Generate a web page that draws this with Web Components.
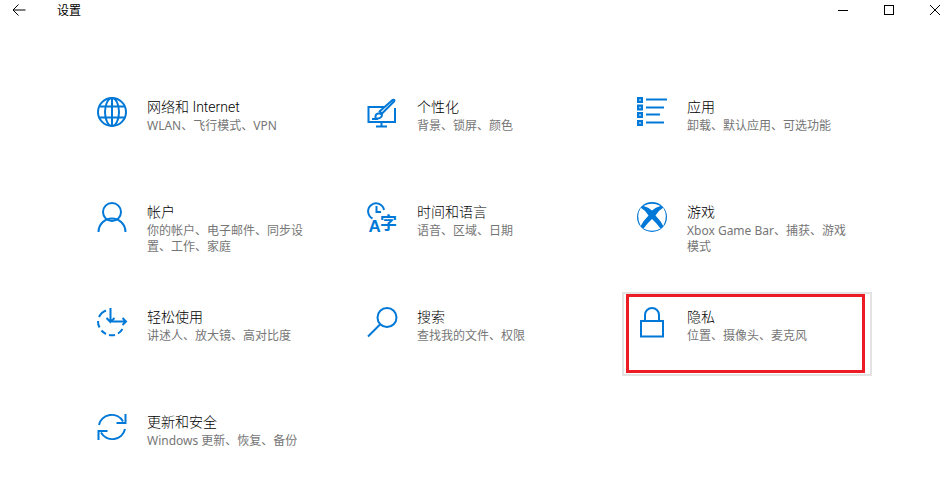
<!DOCTYPE html>
<html lang="zh">
<head>
<meta charset="utf-8">
<title>设置</title>
<style>
    html, body { margin: 0; background: #fff; }
    body { font-family: "Noto Sans", "Noto Sans CJK SC", sans-serif; overflow: hidden; }
</style>
</head>
<body>
<settings-app>
    <title-bar slot="bar" label="设置"></title-bar>

    <settings-tile name="网络和 Internet" desc="WLAN、飞行模式、VPN">
        <svg slot="icon" viewBox="0 0 30 30" fill="none" stroke="#0078d7" stroke-width="2">
            <circle cx="15" cy="15" r="14"/>
            <ellipse cx="15" cy="15" rx="7" ry="14"/>
            <path d="M15 1V29M2.5 9.5H27.5M2.5 20.5H27.5"/>
        </svg>
    </settings-tile>
    <settings-tile name="个性化" desc="背景、锁屏、颜色">
        <svg slot="icon" viewBox="0 0 30 30" fill="none" stroke="#0078d7" stroke-width="2">
            <path d="M18 10H1.5V25H28V11"/>
            <path d="M14.500 25V30M9 29.500H20"/>
            <path d="M5 22H11"/>
            <path d="M27 4.500L15 16.500L12.500 14.500L25.500 3Q28.500 2 27 4.500Z" stroke-linejoin="round"/>
            <path d="M8.500 21.500Q8 17 11 16.500Q14 16 15 18Q14.500 22 8.500 21.500Z" fill="#fff"/>
        </svg>
    </settings-tile>
    <settings-tile name="应用" desc="卸载、默认应用、可选功能">
        <svg slot="icon" viewBox="0 0 30 30" fill="#0078d7">
            <path d="M0 0H6V6H0ZM0 7.500H6V13.500H0ZM0 15H6V21H0ZM0 23H6V29H0Z"/>
            <path d="M2.200 2.200H3.800V3.800H2.200ZM2.200 9.700H3.800V11.300H2.200ZM2.200 17.200H3.800V18.800H2.200ZM2.200 25.200H3.800V26.800H2.200Z" fill="#cfe6f8"/>
            <path d="M9 1.500H30V3.500H9ZM9 9.500H27V11.500H9ZM9 16.500H23V18.500H9ZM9 24.500H27V26.500H9Z"/>
        </svg>
    </settings-tile>

    <settings-tile name="帐户" desc="你的帐户、电子邮件、同步设置、工作、家庭">
        <svg slot="icon" viewBox="0 0 30 30" fill="none" stroke="#0078d7" stroke-width="2">
            <circle cx="15" cy="10" r="9"/>
            <path d="M1.500 30C1.500 22 8 16.500 15 16.500S28.500 22 28.500 30"/>
        </svg>
    </settings-tile>
    <settings-tile name="时间和语言" desc="语音、区域、日期">
        <svg slot="icon" viewBox="0 0 30 30" fill="none" stroke="#0078d7" stroke-width="2">
            <path d="M5.500 16.500A8 8 0 1 1 17 8"/>
            <path d="M9.500 4V10H14"/>
            <text x="1.500" y="30" font-family="Liberation Sans" font-size="17" font-weight="700" fill="#0078d7" stroke="none">A</text>
            <text x="13" y="27" font-family="Noto Sans CJK SC" font-size="17" font-weight="700" fill="#0078d7" stroke="none">字</text>
        </svg>
    </settings-tile>
    <settings-tile name="游戏" desc="Xbox Game Bar、捕获、游戏模式">
        <svg slot="icon" viewBox="0 0 30 30">
            <circle cx="15" cy="15" r="15" fill="#0078d7"/>
            <path d="M6.500 4Q15 -0.500 23.500 4Q18.500 5 15 8.500Q11.500 5 6.500 4Z" fill="#fff"/>
            <path d="M3.800 5.800Q8 8 11.500 13.500Q6 19 3.700 24Q-1.500 14 3.800 5.800Z" fill="#fff"/>
            <path d="M26.200 5.800Q22 8 18.500 13.500Q24 19 26.300 24Q31.500 14 26.200 5.800Z" fill="#fff"/>
            <path d="M6.500 26.500Q10.500 21 15 17Q19.500 21 23.500 26.500Q15 31 6.500 26.500Z" fill="#fff"/>
        </svg>
    </settings-tile>

    <settings-tile name="轻松使用" desc="讲述人、放大镜、高对比度">
        <svg slot="icon" viewBox="0 0 30 30" fill="none" stroke="#0078d7" stroke-width="2">
            <path d="M9 3.500A13 13 0 0 0 2 10M1 14A13 13 0 0 0 2.500 20.500M4.500 23.500A13 13 0 0 0 9 27M12 28A13 13 0 0 0 18 28M21 26.500A13 13 0 0 0 25.500 22"/>
            <path d="M13.500 1V15M9.500 11L13.500 15L17.500 11"/>
            <path d="M15 14.500H29M25.500 11L29 14.500L25.500 18"/>
        </svg>
    </settings-tile>
    <settings-tile name="搜索" desc="查找我的文件、权限">
        <svg slot="icon" viewBox="0 0 30 30" fill="none" stroke="#0078d7" stroke-width="2">
            <circle cx="20" cy="10.500" r="9.500"/>
            <path d="M13 17.500L1 29.500"/>
        </svg>
    </settings-tile>
    <settings-tile name="隐私" desc="位置、摄像头、麦克风" marked>
        <svg slot="icon" viewBox="0 0 30 30" fill="none" stroke="#0078d7" stroke-width="2">
            <rect x="4" y="14" width="22" height="15.500"/>
            <path d="M8 14V8A7 7 0 0 1 22 8V14"/>
        </svg>
    </settings-tile>

    <settings-tile name="更新和安全" desc="Windows 更新、恢复、备份">
        <svg slot="icon" viewBox="0 0 30 30" fill="none" stroke="#0078d7" stroke-width="2">
            <path d="M2 13A13 13 0 0 1 26 9.500"/>
            <path d="M28.500 2V11H19.500"/>
            <path d="M28 17A13 13 0 0 1 4 20.500"/>
            <path d="M1.500 28V19H10.500"/>
        </svg>
    </settings-tile>
</settings-app>

<script>
class SettingsApp extends HTMLElement {
    constructor() {
        super();
        this.attachShadow({ mode: 'open' });
        this.shadowRoot.innerHTML = `
            <style>
                :host {
                    display: block;
                    height: 480px;
                    overflow: hidden;
                    background: #fff;
                }
                .grid {
                    display: grid;
                    grid-template-columns: repeat(3, 250px);
                    grid-auto-rows: 84px;
                    gap: 21px 20px;
                    padding: 50px 0 0 82px;
                }
            </style>
            <slot name="bar"></slot>
            <div class="grid"><slot></slot></div>
        `;
    }
}

class TitleBar extends HTMLElement {
    constructor() {
        super();
        this.attachShadow({ mode: 'open' });
        this.shadowRoot.innerHTML = `
            <style>
                :host {
                    display: flex;
                    align-items: flex-start;
                    height: 32px;
                    color: #000;
                }
                .bar {
                    display: flex;
                    align-items: center;
                    width: 100%;
                    height: 20px;
                }
                .back { width: 14px; height: 14px; margin-left: 12px; }
                .label {
                    margin-left: 31px;
                    padding-top: 1px;
                    font-size: 12px;
                    line-height: 20px;
                    flex: 1;
                }
                .controls { display: flex; margin-right: 9px; gap: 36px; }
                .controls svg { width: 10px; height: 10px; display: block; }
            </style>
            <div class="bar">
                <svg class="back" viewBox="0 0 14 14" fill="none" stroke="#000" stroke-width="1">
                    <path d="M1.500 7H13.500M6.500 1.500L1 7L6.500 12.500"/>
                </svg>
                <span class="label"></span>
                <div class="controls">
                    <svg viewBox="0 0 10 10" fill="none" stroke="#000"><path d="M0 5.500H10"/></svg>
                    <svg viewBox="0 0 10 10" fill="none" stroke="#000"><rect x=".5" y=".5" width="9" height="9"/></svg>
                    <svg viewBox="0 0 10 10" fill="none" stroke="#000"><path d="M0 0L10 10M10 0L0 10"/></svg>
                </div>
            </div>
        `;
        this.shadowRoot.querySelector('.label').textContent = this.getAttribute('label');
    }
}

class SettingsTile extends HTMLElement {
    constructor() {
        super();
        this.attachShadow({ mode: 'open' });
        this.shadowRoot.innerHTML = `
            <style>
                :host {
                    display: flex;
                    position: relative;
                    box-sizing: border-box;
                    height: 84px;
                    padding: 13px;
                    gap: 20px;
                    border: 2px solid transparent;
                }
                :host([marked]) { border-color: #e3e3e3; }
                .icon { flex: none; width: 30px; height: 30px; }
                ::slotted(svg) { display: block; width: 30px; height: 30px; overflow: visible; }
                .title {
                    font-family: Roboto, "Noto Sans CJK SC", sans-serif;
                    font-size: 14px;
                    font-weight: 300;
                    line-height: 20px;
                    color: #000;
                }
                .desc {
                    width: 160px;
                    margin-top: 1px;
                    font-size: 12px;
                    line-height: 16px;
                    color: #767676;
                }
                .mark { display: none; }
                :host([marked]) .mark {
                    display: block;
                    position: absolute;
                    left: 2px;
                    top: 0;
                    right: 5px;
                    bottom: 1px;
                    border: 3px solid #ed1c24;
                }
            </style>
            <div class="icon"><slot name="icon"></slot></div>
            <div>
                <div class="title"></div>
                <div class="desc"></div>
            </div>
            <div class="mark"></div>
        `;
        this.shadowRoot.querySelector('.title').textContent = this.getAttribute('name');
        this.shadowRoot.querySelector('.desc').textContent = this.getAttribute('desc');
    }
}

customElements.define('settings-app', SettingsApp);
customElements.define('title-bar', TitleBar);
customElements.define('settings-tile', SettingsTile);
</script>
</body>
</html>
